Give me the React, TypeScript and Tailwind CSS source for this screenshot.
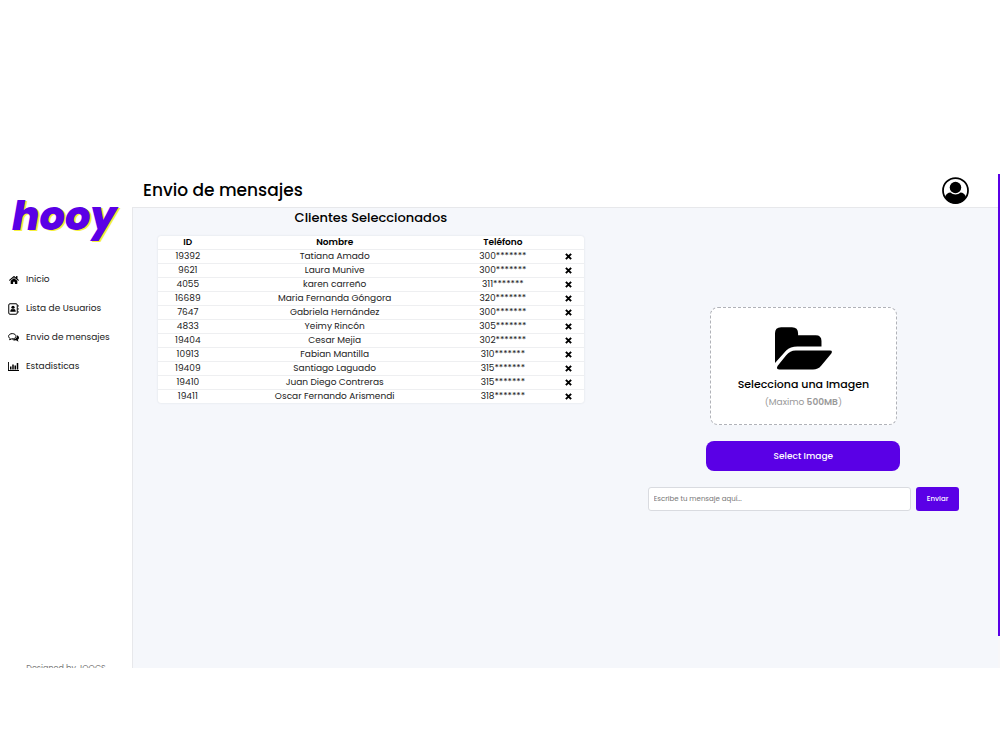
import { FaHome } from "react-icons/fa";

const navItems = [
  { label: "Inicio", icon: "home" },
  { label: "Lista de Usuarios", icon: "book" },
  { label: "Envio de mensajes", icon: "chat" },
  { label: "Estadisticas", icon: "chart" },
];

const clients = [
  ["19392", "Tatiana Amado", "300*******"],
  ["9621", "Laura Munive", "300*******"],
  ["4055", "karen carreño", "311*******"],
  ["16689", "Maria Fernanda Góngora", "320*******"],
  ["7647", "Gabriela Hernández", "300*******"],
  ["4833", "Yeimy Rincón", "305*******"],
  ["19404", "Cesar Mejia", "302*******"],
  ["10913", "Fabian Mantilla", "310*******"],
  ["19409", "Santiago Laguado", "315*******"],
  ["19410", "Juan Diego Contreras", "315*******"],
  ["19411", "Oscar Fernando Arismendi", "318*******"],
];

function NavIcon({ name }: { name: string }) {
  if (name === "home") return <FaHome className="size-[10px]" />;
  if (name === "book")
    return (
      <svg viewBox="0 0 22 24" className="h-3 w-[11px]" fill="currentColor">
        <rect x="1.500" y="1.500" width="17" height="21" rx="2.500" fill="none" stroke="currentColor" strokeWidth="2" />
        <circle cx="10" cy="8.500" r="3.200" />
        <path d="M4.500 17.500c0-4 1.800-5.500 3.500-5.500 1.200.8 2.800.8 4 0 1.700 0 3.500 1.500 3.500 5.500Z" />
        <path d="M19.500 4H21v3.500h-1.500ZM19.500 10H21v3.500h-1.500ZM19.500 16H21v3.500h-1.500Z" />
      </svg>
    );
  if (name === "chat")
    return (
      <svg viewBox="0 0 22 18" className="h-[9px] w-[11px]" fill="none" stroke="currentColor" strokeWidth="2">
        <path d="M8.500 1.200C4.500 1.200 1.200 3.500 1.200 6.500c0 1.800 1.200 3.400 3 4.300L3.200 13.500l4.300-1.800c5 .3 8.500-2.200 8.500-5.200 0-3-3.300-5.300-7.500-5.300Z" />
        <path fill="currentColor" stroke="none" d="M18 4.500c2.400 1 4 2.700 4 4.800 0 1.700-1 3-2.500 4l1.500 4-5-2.600c-3 .5-6.200-.2-8-1.900C13.500 13 18 10.500 18 6.500Z" />
      </svg>
    );
  return (
    <svg viewBox="0 0 22 18" className="h-[9px] w-[11px]" fill="currentColor">
      <path d="M0 0h1.800v16H22v2H0ZM4 9h3v6H4ZM8.500 5h3v10h-3ZM13 7h3v8h-3ZM17.500 2h3v13h-3Z" />
    </svg>
  );
}

function Sidebar() {
  return (
    <aside className="flex w-[132px] shrink-0 flex-col overflow-hidden">
      <a
        href="#inicio"
        className="mt-4 h-[60px] pl-3 text-[40px] leading-[52px] font-extrabold text-[#5a00e6] italic [text-shadow:2px_1px_0_#f6f03c]"
      >
        hooy
      </a>
      <nav className="mt-[15px] flex flex-col">
        {navItems.map((item) => (
          <a key={item.label} href="#" className="flex h-[29px] items-center gap-[7px] pl-2 text-[9px] text-[#222]">
            <span className="flex w-[11px] justify-center text-black">
              <NavIcon name={item.icon} />
            </span>
            {item.label}
          </a>
        ))}
      </nav>
      <p className="mt-auto -mb-2 text-center text-[8px] leading-[14px] text-[#777]">Designed by JOOCS</p>
    </aside>
  );
}

function ClientTable() {
  return (
    <div className="overflow-hidden rounded-[3px] bg-white shadow-[0_0_2px_#d9dbe0]">
      <table className="w-full table-fixed border-collapse text-center text-[9px] leading-[13px] text-[#222]">
        <thead>
          <tr className="text-black">
            <th className="w-[14%] p-0 font-semibold">ID</th>
            <th className="p-0 font-semibold">Nombre</th>
            <th className="w-[24%] p-0 font-semibold">Teléfono</th>
            <th className="w-[7%] p-0" aria-label="Quitar" />
          </tr>
        </thead>
        <tbody>
          {clients.map(([id, name, phone]) => (
            <tr key={id} className="border-t border-[#eeeff1]">
              <td className="p-0">{id}</td>
              <td className="p-0">{name}</td>
              <td className="p-0">{phone}</td>
              <td className="p-0">
                <button type="button" aria-label={`Quitar ${name}`} className="flex h-[13px] w-full items-center justify-center text-black">
                  <svg viewBox="0 0 12 12" className="size-[7px]" stroke="currentColor" strokeWidth="3.400">
                    <path d="M1.500 1.500l9 9M10.500 1.500l-9 9" />
                  </svg>
                </button>
              </td>
            </tr>
          ))}
        </tbody>
      </table>
    </div>
  );
}

function Composer() {
  return (
    <form className="flex w-[80%] flex-col items-center" onSubmit={(e) => e.preventDefault()}>
      <div className="flex w-[60%] flex-col items-center rounded-lg border border-dashed border-[#b0b2b8] bg-white pt-[19px] pb-[14px]">
        <svg viewBox="0 0 168 126" className="mb-1 h-[43px] w-[57px]">
          <path d="M0 106V18Q0 0 18 0H50Q68 0 68 18V24H120Q137 24 137 41V57H66Q45 57 33 69Z" />
          <path d="M33 83Q44 69 61 69H162Q171 69 166 78L136 114Q127 125 112 125H12Q2 125 8 114Z" />
        </svg>
        <h3 className="text-[11px] leading-5 font-medium text-black">Selecciona una Imagen</h3>
        <p className="text-[9px] leading-4 text-[#999]">
          (Maximo <strong className="font-semibold">500MB</strong>)
        </p>
      </div>
      <button type="button" className="mt-4 h-[30px] w-[194px] rounded-lg bg-[#5a00e6] pt-px text-[9px] font-medium text-white">
        Select Image
      </button>
      <div className="mt-4 flex w-full gap-[5px]">
        <input
          type="text"
          aria-label="Mensaje"
          placeholder="Escribe tu mensaje aquí..."
          className="h-6 min-w-0 flex-1 rounded-[3px] border border-[#d9dbe0] bg-white px-[5px] text-[7px] placeholder:text-[#757575]"
        />
        <button type="submit" className="h-6 w-[43px] rounded-[3px] bg-[#5a00e6] text-[7px] font-medium text-white">
          Enviar
        </button>
      </div>
    </form>
  );
}

export default function App() {
  return (
    <div className="min-h-screen bg-white pt-[174px] font-['Poppins','Inter',sans-serif] text-black">
      <div className="flex h-[494px]">
        <Sidebar />
        <div className="flex min-w-0 flex-1 flex-col">
          <header className="flex h-[34px] items-center justify-between border-b border-[#e7e8eb] pr-[29px] pl-[11px]">
            <h1 className="text-[17px] font-medium">Envio de mensajes</h1>
            <button type="button" aria-label="Perfil">
              <svg viewBox="0 0 54 54" className="size-[27px]">
                <circle cx="27" cy="27" r="25" fill="none" stroke="#000" strokeWidth="3.500" />
                <circle cx="27" cy="21" r="11.500" />
                <path d="M6 40c2-6 6-9 11-9 5 5 15 5 20 0 5 0 9 3 11 9-4 8-12 13-21 13S10 48 6 40Z" />
              </svg>
            </button>
          </header>
          <main className="flex flex-1 border-l border-[#e7e8eb] bg-[#f5f7fb]">
            <section className="w-[55%] px-[25px]">
              <h2 className="mb-[9px] pt-px text-center text-[13px] leading-[18px] font-medium">Clientes Seleccionados</h2>
              <ClientTable />
            </section>
            <section className="flex w-[45%] flex-col items-center pt-[99px]">
              <Composer />
            </section>
          </main>
        </div>
        <div className="w-[2px] shrink-0 bg-[#f7f7f9]">
          <div className="h-[462px] bg-[#5a00e6]" />
        </div>
      </div>
    </div>
  );
}
